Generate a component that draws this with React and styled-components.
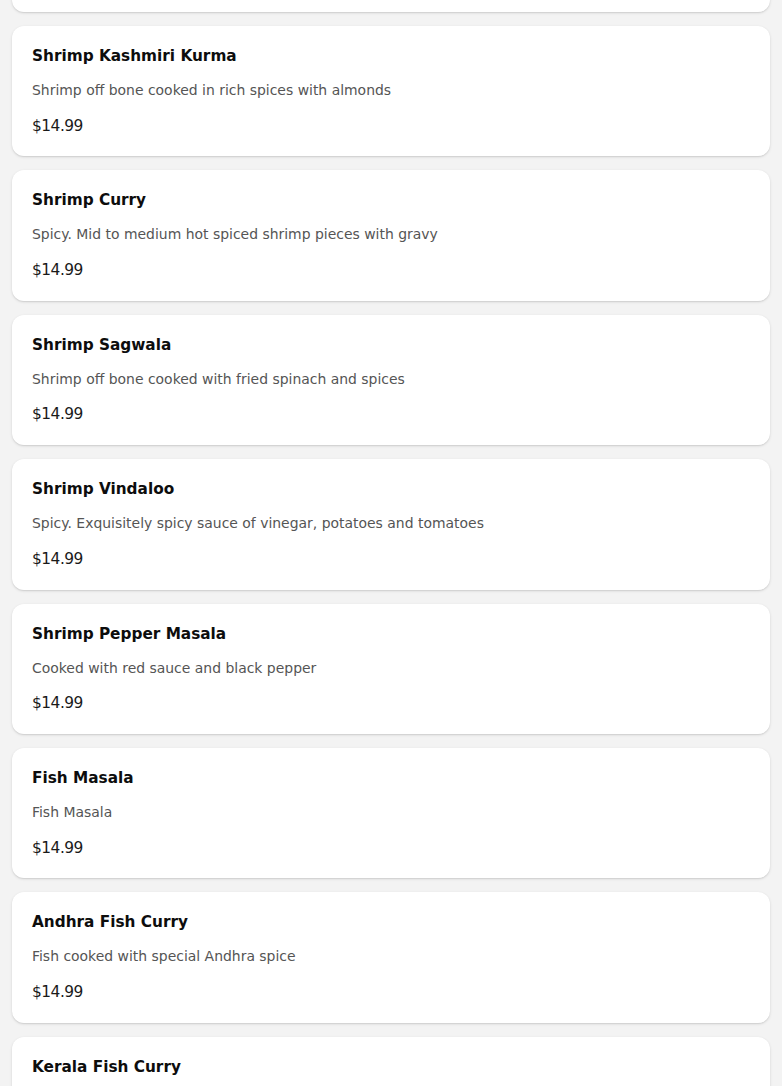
import React from "react";
import styled, { createGlobalStyle } from "styled-components";

const Global = createGlobalStyle`
  html, body { margin: 0; padding: 0; background: #f3f3f3; }
  body { font-family: "DejaVu Sans", "Noto Sans", sans-serif; overflow: hidden; }
`;

const Page = styled.main`
  padding: 0 12px;
  display: flex;
  flex-direction: column;
  gap: 14px;
  margin-top: -118.3px;
`;

const Card = styled.article`
  background: #ffffff;
  border-radius: 12px;
  box-shadow: 0 1px 3px rgba(0, 0, 0, 0.12), 0 1px 1px rgba(0, 0, 0, 0.06);
  padding: 20px 20px;
  display: flex;
  flex-direction: column;
  height: 130.4px;
  box-sizing: border-box;
`;

const Title = styled.h3`
  margin: 0;
  font-size: 15.3px;
  line-height: 20px;
  font-weight: 700;
  color: #0d0d0d;
`;

const Desc = styled.p`
  margin: 14px 0 0;
  font-size: 13.95px;
  line-height: 20px;
  color: #555555;
`;

const Price = styled.div`
  margin-top: 15.6px;
  font-size: 15.4px;
  letter-spacing: -0.5px;
  line-height: 20px;
  color: #1a1a1a;
`;

const items = [
  { name: "Shrimp Masala", desc: "Shrimp cooked with onion, tomato and masala sauce" },
  { name: "Shrimp Kashmiri Kurma", desc: "Shrimp off bone cooked in rich spices with almonds" },
  { name: "Shrimp Curry", desc: "Spicy. Mid to medium hot spiced shrimp pieces with gravy" },
  { name: "Shrimp Sagwala", desc: "Shrimp off bone cooked with fried spinach and spices" },
  { name: "Shrimp Vindaloo", desc: "Spicy. Exquisitely spicy sauce of vinegar, potatoes and tomatoes" },
  { name: "Shrimp Pepper Masala", desc: "Cooked with red sauce and black pepper" },
  { name: "Fish Masala", desc: "Fish Masala" },
  { name: "Andhra Fish Curry", desc: "Fish cooked with special Andhra spice" },
  { name: "Kerala Fish Curry", desc: "Fish cooked with coconut milk and Kerala spices" },
];

export default function App() {
  return (
    <>
      <Global />
      <Page>
        {items.map((it) => (
          <Card key={it.name}>
            <Title>{it.name}</Title>
            <Desc>{it.desc}</Desc>
            <Price>$14.99</Price>
          </Card>
        ))}
      </Page>
    </>
  );
}
